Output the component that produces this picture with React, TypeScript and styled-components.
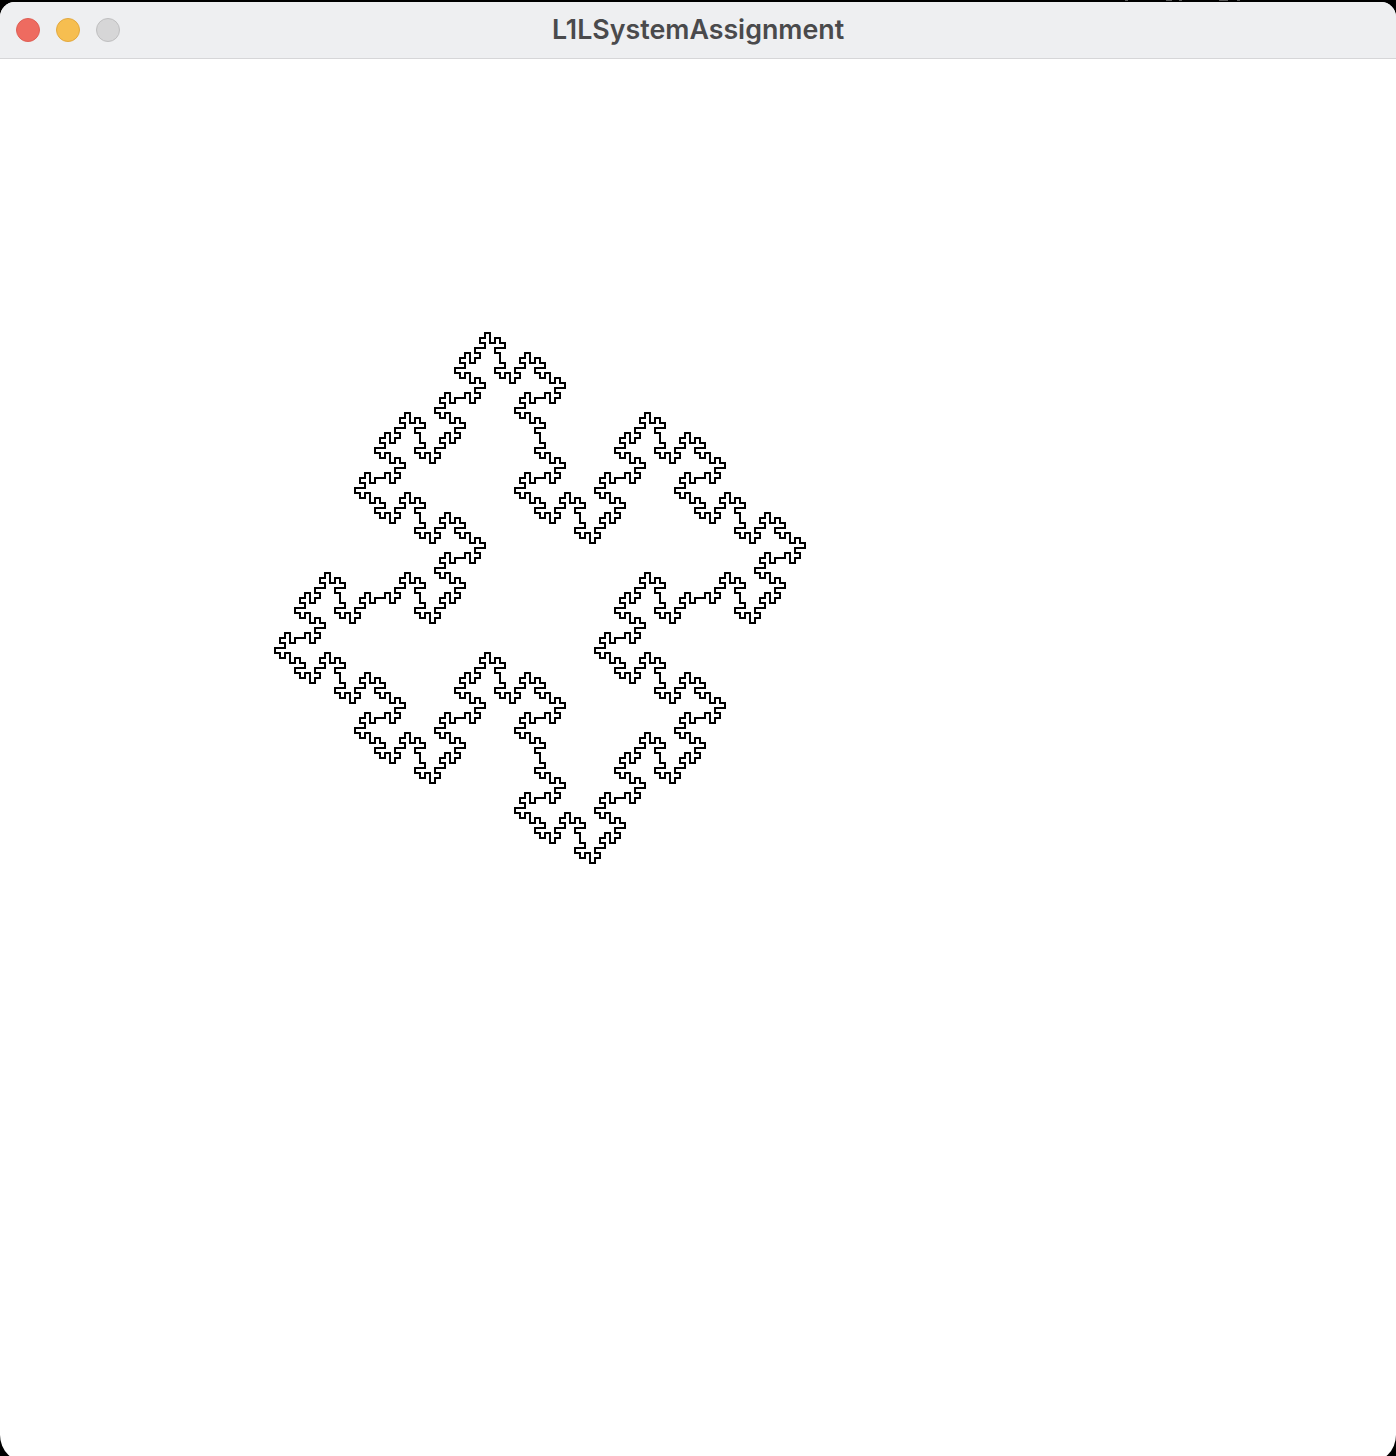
import React, { useMemo } from "react";
import styled, { createGlobalStyle } from "styled-components";

const GlobalStyle = createGlobalStyle`
  html, body { margin: 0; padding: 0; background: #000; }
  #root { width: 1396px; height: 1456px; }
`;

const Page = styled.div`
  display: flex;
  flex-direction: column;
  width: 1396px;
  height: 1456px;
  overflow: hidden;
  background: #000;
`;

const DesktopEdge = styled.div`
  flex: none;
  height: 2px;
  background:
    linear-gradient(#555, #555) 1125px 0 / 3px 1px no-repeat,
    linear-gradient(#555, #555) 1166px 0 / 6px 1px no-repeat,
    linear-gradient(#555, #555) 1179px 0 / 3px 1px no-repeat,
    linear-gradient(#555, #555) 1219px 0 / 9px 1px no-repeat,
    linear-gradient(#555, #555) 1237px 0 / 3px 1px no-repeat,
    #000;
`;

const Window = styled.div`
  flex: none;
  display: flex;
  flex-direction: column;
  height: 1461px;
  border-radius: 15px 15px 28px 28px;
  overflow: hidden;
  background: #fff;
`;

const TitleBar = styled.header`
  position: relative;
  flex: none;
  display: flex;
  align-items: center;
  justify-content: center;
  height: 57px;
  box-sizing: border-box;
  padding-bottom: 2px;
  background: #eeeff1;
  border-bottom: 1px solid #d6d6d8;
`;

const Lights = styled.div`
  position: absolute;
  left: 16px;
  top: 16px;
  display: flex;
  gap: 16px;
`;

const Light = styled.span<{ $fill: string; $edge: string }>`
  width: 24px;
  height: 24px;
  box-sizing: border-box;
  border-radius: 50%;
  background: ${(p) => p.$fill};
  border: 1px solid ${(p) => p.$edge};
`;

const Title = styled.h1`
  margin: 0;
  font-family: Inter, "Liberation Sans", sans-serif;
  font-size: 26.8px;
  font-weight: 600;
  line-height: 54px;
  color: #4a4a4c;
`;

const Canvas = styled.svg`
  display: block;
  flex: none;
  width: 1396px;
  height: 1404px;
`;

const Curve = styled.path`
  fill: none;
  stroke: #000;
  stroke-width: 2;
  stroke-linejoin: miter;
  stroke-linecap: square;
  shape-rendering: crispEdges;
`;

function expand(axiom: string, depth: number) {
  let s = axiom;
  for (let i = 0; i < depth; i++) s = s.replace(/F/g, "F+F-F-FF+F+F-F");
  return s;
}

function buildPath(x0: number, y0: number, step: number) {
  const dirs = [
    [1, 0],
    [0, 1],
    [-1, 0],
    [0, -1],
  ];
  let d = 0;
  let x = x0;
  let y = y0;
  let out = `M${x} ${y}`;
  for (const c of expand("F-F-F-F", 3)) {
    if (c === "F") {
      x += dirs[d][0] * step;
      y += dirs[d][1] * step;
      out += `L${x} ${y}`;
    } else if (c === "+") d = (d + 3) % 4;
    else d = (d + 1) % 4;
  }
  return out + "Z";
}

export default function App() {
  const path = useMemo(() => buildPath(380, 379, 5), []);
  return (
    <Page>
      <GlobalStyle />
      <DesktopEdge />
      <Window>
        <TitleBar>
          <Lights>
            <Light $fill="#ee6b60" $edge="#df5f55" />
            <Light $fill="#f6be50" $edge="#e3a93f" />
            <Light $fill="#d6d6d7" $edge="#bfbfc0" />
          </Lights>
          <Title>L1LSystemAssignment</Title>
        </TitleBar>
        <Canvas viewBox="0 0 1396 1404">
          <Curve d={path} />
        </Canvas>
      </Window>
    </Page>
  );
}
